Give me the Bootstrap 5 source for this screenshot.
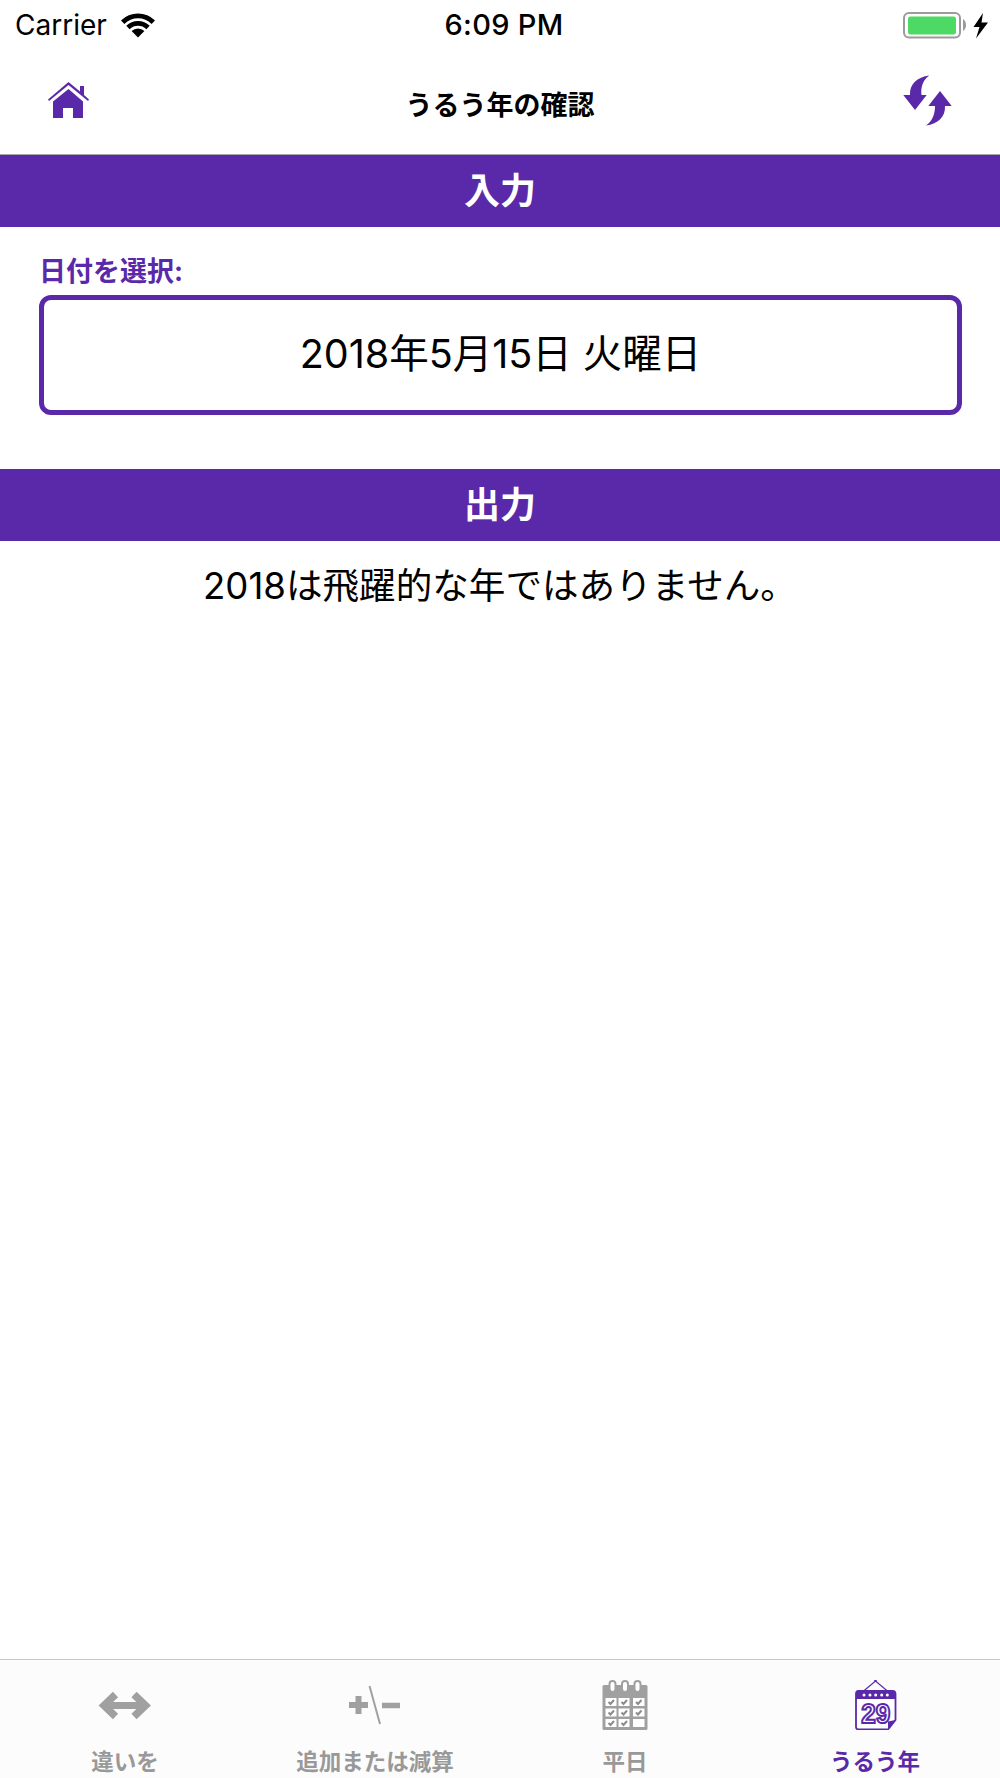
<!DOCTYPE html>
<html lang="ja">
<head>
  <meta charset="UTF-8">
  <meta name="viewport" content="width=device-width, initial-scale=1.0">
  <title>うるう年の確認</title>
  <link href="https://cdn.jsdelivr.net/npm/bootstrap@5.3.0/dist/css/bootstrap.min.css" rel="stylesheet">
  <style>
    body {
      font-family: Inter, "Noto Sans CJK JP", sans-serif;
      color: #000;
      height: 100vh;
      overflow: hidden;
    }
    .tint { color: #5a29aa; }
    .status-bar { height: 50px; padding: 0 12px 0 15px; font-size: 28px; }
    .status-time { font-weight: 500; font-size: 29px; letter-spacing: .3px; margin-left: 5px; }
    .status-side { width: 300px; gap: 13px; }
    .top-bar { height: 105px; padding: 25px 48px 27px; border-bottom: 1px solid #a9a9ad; }
    .top-title { font-size: 27px; font-weight: 700; padding-top: 10px; }
    .band { height: 72px; background: #5a29aa; color: #fff; font-size: 36px; font-weight: 700; }
    .date-block { padding: 29px 38px 54px 39px; }
    .date-label { font-size: 27px; font-weight: 700; line-height: 32px; margin-bottom: 7px; color: #5a29aa; }
    .date-box {
      height: 120px;
      width: 100%;
      border: 5px solid #5a29aa;
      border-radius: 12px;
      background: #fff;
      font-size: 39.5px;
      color: #000;
    }
    .date-box:hover { border-color: #5a29aa; color: #000; background: #fff; }
    .result-line { font-size: 36.6px; line-height: 44px; padding-top: 23px; }
    .tab-bar { height: 119px; padding-top: 20px; background: #fcfcfc; border-top: 1px solid #c9c9c9; }
    .tab-label { font-size: 22.5px; font-weight: 700; line-height: 28px; margin-top: 18px; color: #999; white-space: nowrap; }
    .tab-label.is-on { color: #5a29aa; }
  </style>
</head>
<body class="d-flex flex-column">
  <!-- status bar -->
  <div class="status-bar d-flex justify-content-between align-items-center">
    <div class="status-side d-flex align-items-center">
      <span>Carrier</span>
      <svg width="36" height="26" viewBox="120 11 36 26" aria-hidden="true">
        <path d="M121 19.5 A24 24 0 0 1 155 19.5 L151.6 23 A19.2 19.2 0 0 0 124.4 23Z" fill="#000"/>
        <path d="M126.3 24.8 A16.6 16.6 0 0 1 149.7 24.8 L146.4 28.2 A12 12 0 0 0 129.6 28.2Z" fill="#000"/>
        <path d="M131.6 30.1 A9 9 0 0 1 144.4 30.1 L138 36.5Z" fill="#000"/>
      </svg>
    </div>
    <div class="status-time">6:09 PM</div>
    <div class="status-side d-flex justify-content-end align-items-center">
      <svg width="85" height="28" viewBox="903 10 85 28" aria-hidden="true">
        <rect x="904" y="12" width="56" height="24.5" rx="5" fill="none" stroke="#9b9b9b" stroke-width="2"/>
        <rect x="908" y="15.5" width="48" height="18" rx="2.5" fill="#4cd964"/>
        <path d="M963 18 Q966 20 966 24 Q966 28 963 30Z" fill="#9b9b9b"/>
        <path d="M983 12 L973.5 26 L979.5 26 L976 37.5 L988 21.5 L981.5 21.5Z" fill="#000"/>
      </svg>
    </div>
  </div>

  <!-- nav -->
  <div class="top-bar d-flex justify-content-between align-items-center">
    <svg class="tint" width="50" height="52" viewBox="48 75 50 52" aria-label="ホーム">
      <path d="M68.5 82 L80 91.6 L80 86 L84 86 L84 95 L89 99.5 L88 101 L68.5 85 L49 101 L48 99.5Z" fill="currentColor"/>
      <path d="M68.5 89 L83 101.5 L83 118 L73 118 L73 108 L63 108 L63 118 L53 118 L53 101.5Z" fill="currentColor"/>
    </svg>
    <div class="top-title">うるう年の確認</div>
    <svg class="tint" width="50" height="52" viewBox="902 75 50 52" aria-label="更新">
      <path d="M929.3 75.5 C917 77 909.5 84 910 95 L903.3 95 L915 110 L926.7 95 L921.5 95 C920.5 87 923 80 929.3 75.5Z" fill="currentColor"/>
      <path d="M926 125.5 C938 124 945.5 117 945 106 L951.7 106 L940 91 L928.3 106 L935 106 C935 114 932.5 121 926 125.5Z" fill="currentColor"/>
    </svg>
  </div>

  <div class="band d-flex align-items-center justify-content-center">入力</div>
  <div class="date-block">
    <label class="date-label d-block">日付を選択:</label>
    <button type="button" class="btn date-box d-flex align-items-center justify-content-center">2018年5月15日 火曜日</button>
  </div>

  <div class="band d-flex align-items-center justify-content-center">出力</div>
  <div class="result-line text-center flex-grow-1">2018は飛躍的な年ではありません。</div>

  <!-- tabs -->
  <div class="tab-bar row g-0 text-center">
    <div class="col-3 d-flex flex-column align-items-center">
      <svg width="60" height="50" viewBox="95 1680 60 50" aria-hidden="true">
        <path d="M107 1705.5 H143" stroke="#a0a0a0" stroke-width="7" fill="none"/>
        <path d="M115.5 1694.5 L104 1705.5 L115.5 1716.5" stroke="#a0a0a0" stroke-width="7.5" fill="none"/>
        <path d="M134 1694.5 L145.5 1705.5 L134 1716.5" stroke="#a0a0a0" stroke-width="7.5" fill="none"/>
      </svg>
      <div class="tab-label">違いを</div>
    </div>
    <div class="col-3 d-flex flex-column align-items-center">
      <svg width="60" height="50" viewBox="345 1680 60 50" aria-hidden="true">
        <path d="M349 1705 H368 M358.5 1696 V1714" stroke="#a0a0a0" stroke-width="6" fill="none"/>
        <path d="M369.5 1686 L380 1724" stroke="#a0a0a0" stroke-width="2" fill="none"/>
        <path d="M382 1705.5 H400" stroke="#a0a0a0" stroke-width="5.5" fill="none"/>
      </svg>
      <div class="tab-label">追加または減算</div>
    </div>
    <div class="col-3 d-flex flex-column align-items-center">
      <svg width="60" height="50" viewBox="595 1680 60 50" aria-hidden="true">
        <rect x="602.5" y="1685" width="45" height="45" rx="1.5" fill="#a0a0a0"/>
        <g fill="#fff" stroke="#a0a0a0" stroke-width="2">
          <rect x="609.5" y="1681" width="6" height="11" rx="3"/>
          <rect x="622" y="1681" width="6" height="11" rx="3"/>
          <rect x="634.5" y="1681" width="6" height="11" rx="3"/>
        </g>
        <g fill="#fff">
          <rect x="605.5" y="1698" width="11" height="8"/><rect x="618.5" y="1698" width="11" height="8"/><rect x="633" y="1698" width="11.5" height="8"/>
          <rect x="605.5" y="1708.5" width="11" height="8"/><rect x="618.5" y="1708.5" width="11" height="8"/><rect x="633" y="1708.5" width="11.5" height="8"/>
          <rect x="605.5" y="1719" width="11" height="8"/><rect x="618.5" y="1719" width="11" height="8"/><rect x="633" y="1719" width="11.5" height="8"/>
        </g>
        <path d="M608.5 1702 l2 2 l3.5 -4 M621.5 1702 l2 2 l3.5 -4 M636 1702 l2 2 l3.5 -4 M608.5 1712.5 l2 2 l3.5 -4 M621.5 1712.5 l2 2 l3.5 -4 M636 1712.5 l2 2 l3.5 -4 M608.5 1723 l2 2 l3.5 -4 M621.5 1723 l2 2 l3.5 -4" stroke="#8c8c8c" stroke-width="2" fill="none"/>
      </svg>
      <div class="tab-label">平日</div>
    </div>
    <div class="col-3 d-flex flex-column align-items-center">
      <svg class="tint" width="60" height="50" viewBox="845 1680 60 50" aria-hidden="true">
        <path d="M863 1691.5 L875.5 1681 L888 1691.5" stroke="currentColor" stroke-width="1.2" fill="none"/>
        <circle cx="875.5" cy="1680.8" r="1.3" fill="currentColor"/>
        <path d="M858.5 1691 H892.5 Q895.5 1691 895.5 1694 V1720 L888 1729.5 H858.5 Q856 1729.5 856 1727 V1694 Q856 1691 858.5 1691Z" fill="#fff" stroke="currentColor" stroke-width="1.8"/>
        <path d="M858.5 1691 H892.5 Q895.5 1691 895.5 1694 V1699 H856 V1694 Q856 1691 858.5 1691Z" fill="currentColor"/>
        <path d="M895.5 1720 L888 1721.5 L888 1729.5Z" fill="currentColor"/>
        <g fill="#fff">
          <circle cx="864" cy="1695" r="1.5"/><circle cx="870" cy="1695" r="1.5"/><circle cx="875.7" cy="1695" r="1.5"/><circle cx="881.7" cy="1695" r="1.5"/><circle cx="887.3" cy="1695" r="1.5"/>
        </g>
        <text x="875.8" y="1723" text-anchor="middle" font-family="Liberation Sans, sans-serif" font-weight="700" font-size="27" textLength="29" lengthAdjust="spacingAndGlyphs" fill="#fff" stroke="currentColor" stroke-width="2">29</text>
      </svg>
      <div class="tab-label is-on">うるう年</div>
    </div>
  </div>

  <script src="https://cdn.jsdelivr.net/npm/bootstrap@5.3.0/dist/js/bootstrap.bundle.min.js"></script>
</body>
</html>
